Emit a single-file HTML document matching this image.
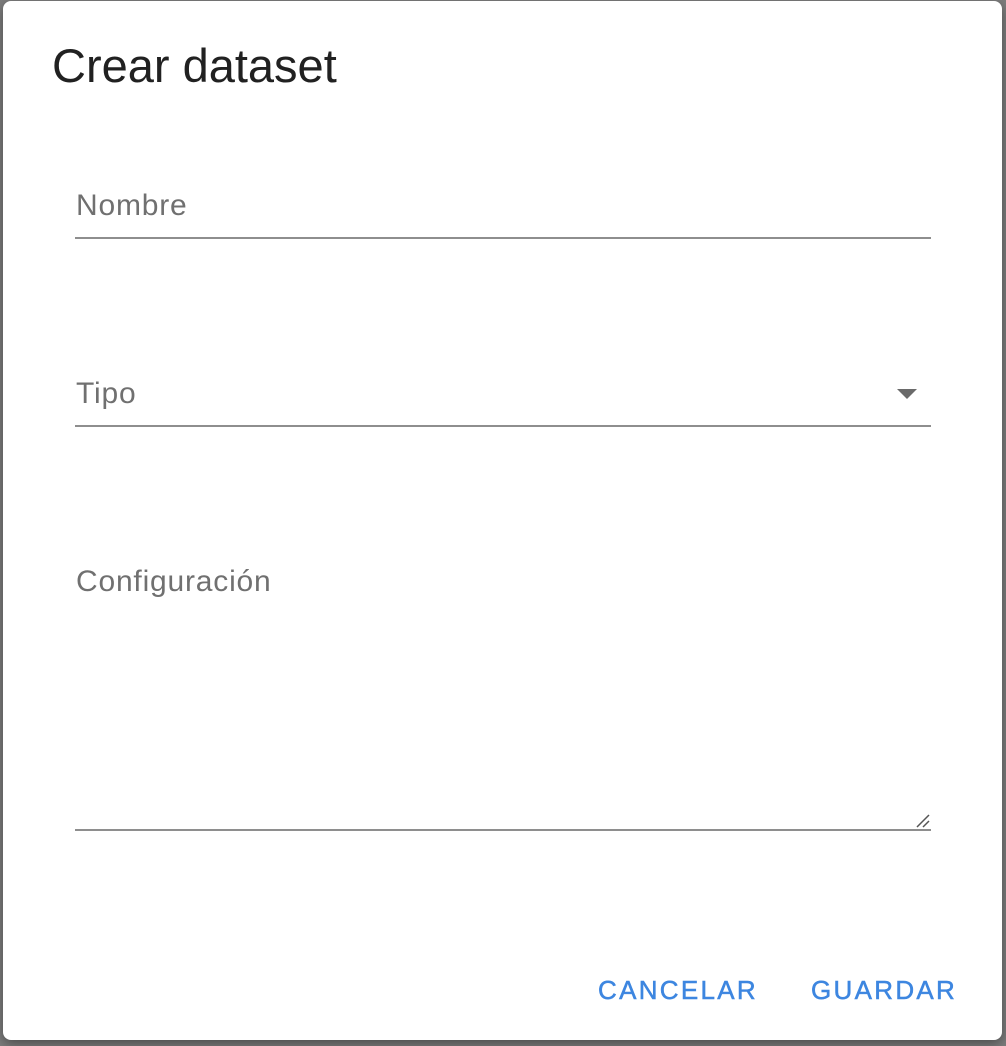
<!DOCTYPE html>
<html><head><meta charset="utf-8"><style>
html,body{margin:0;padding:0;width:1006px;height:1046px;overflow:hidden;background:#7d7d7d;font-family:"Liberation Sans",sans-serif;}
.dlg{position:absolute;left:3px;top:1px;width:999px;height:1039px;background:#fff;border-radius:8px;box-shadow:0 4px 12px rgba(0,0,0,.4);}
.t{position:absolute;left:49px;top:37px;font-size:47px;color:#212121;white-space:nowrap;}
.lab{position:absolute;left:73px;font-size:30px;letter-spacing:0.8px;color:#707070;white-space:nowrap;}
.ln{position:absolute;left:72px;width:856px;height:2px;background:#8e8e8e;}
.btn{position:absolute;top:974px;font-size:26px;color:#3d86e0;letter-spacing:2.3px;font-weight:500;white-space:nowrap;-webkit-text-stroke:0.5px #3d86e0;}
</style></head><body>
<div class="dlg">
<div class="t">Crear dataset</div>
<div class="lab" style="top:188px">Nombre</div>
<div class="ln" style="top:236px"></div>
<div class="lab" style="top:376px">Tipo</div>
<svg style="position:absolute;left:894px;top:388px" width="20" height="11"><path d="M0 0H20L10 10Z" fill="#6a6a6a"/></svg>
<div class="ln" style="top:424px"></div>
<div class="lab" style="top:564px">Configuración</div>
<svg style="position:absolute;left:912px;top:812px" width="16" height="16"><path d="M2 14L14 2M8 14L14 8" stroke="#555" stroke-width="1.5"/></svg>
<div class="ln" style="top:828px"></div>
<div class="btn" style="left:595px">CANCELAR</div>
<div class="btn" style="left:808px">GUARDAR</div>
</div>
</body></html>
